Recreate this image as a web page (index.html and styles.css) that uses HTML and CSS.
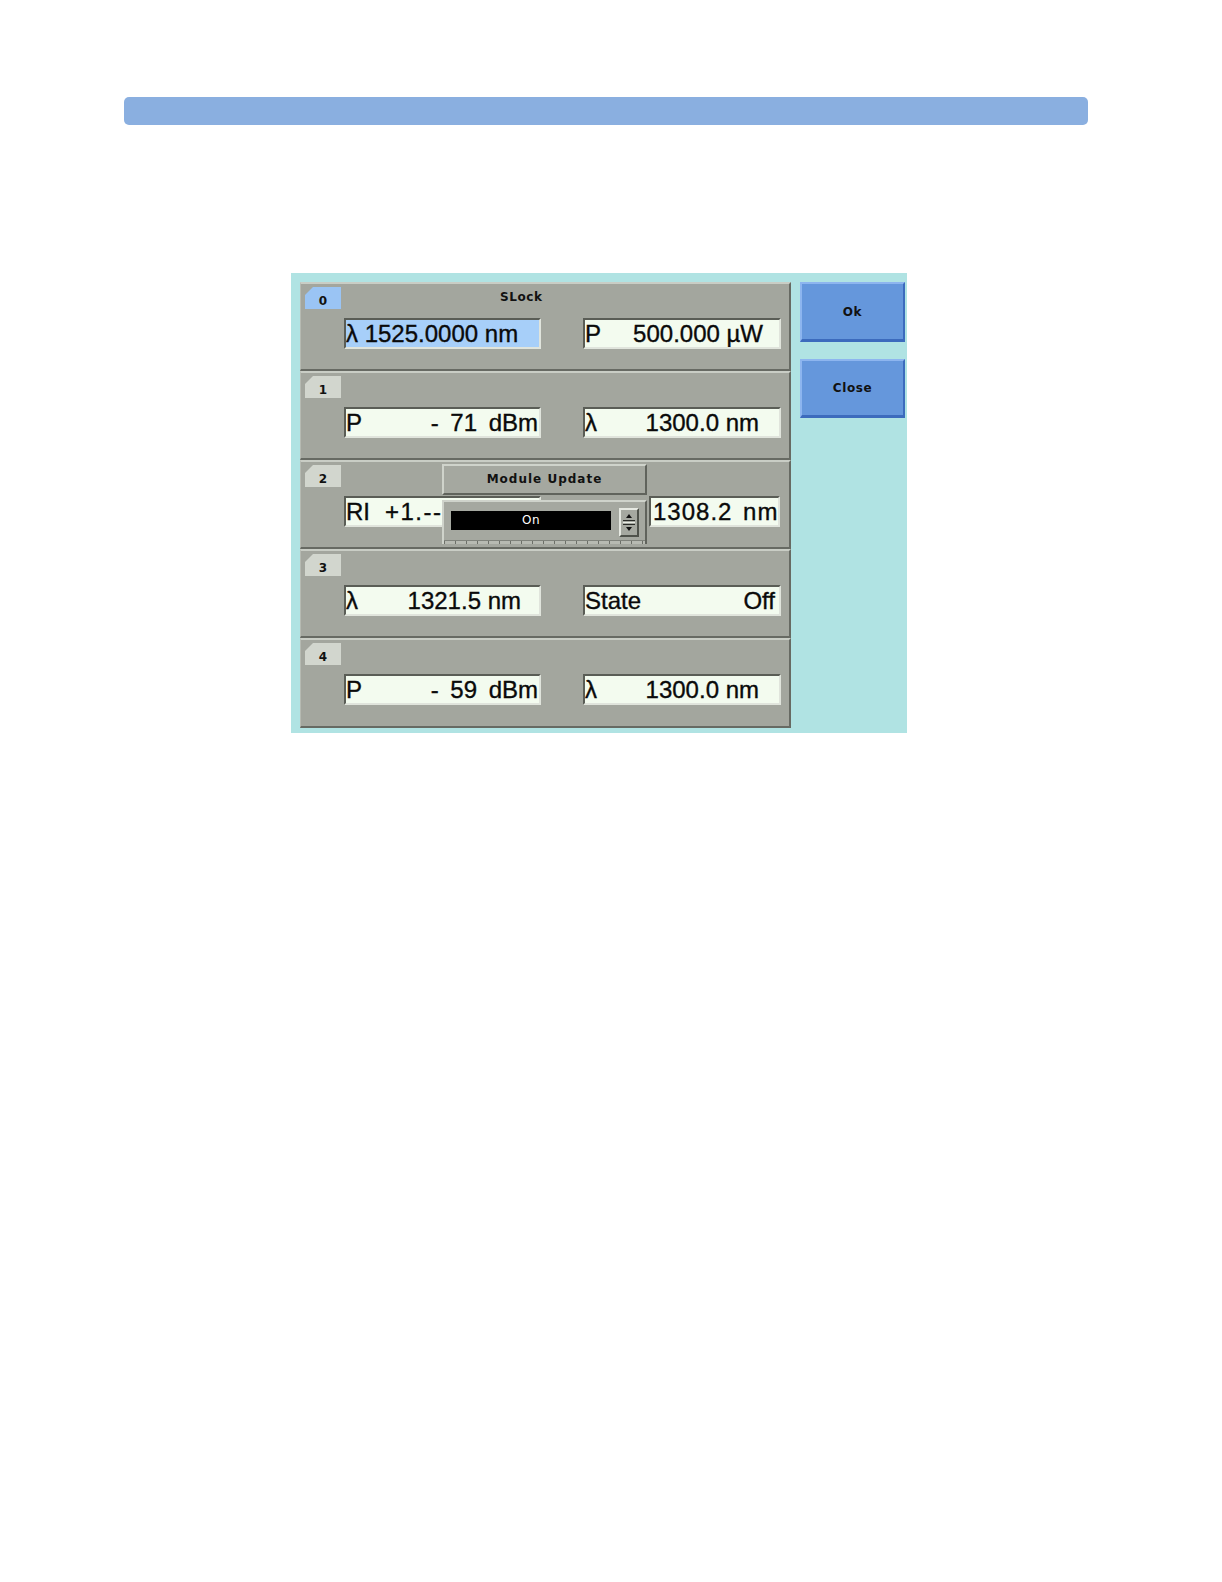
FILE: index.html
```html
<!DOCTYPE html>
<html>
<head>
<meta charset="utf-8">
<title>Module Update</title>
<link rel="stylesheet" href="styles.css">
</head>
<body>
<div class="topbar"></div>
<div class="panel">
  <div class="rows">
    <div class="row">
      <div class="row-head"><div class="tab tab-active">0</div><div class="row-title">SLock</div></div>
      <div class="fields">
        <div class="field field-left field-sel"><span class="lbl">λ 1525.0000 nm</span></div>
        <div class="field field-right"><span class="lbl">P</span><span class="val pr16">500.000 µW</span></div>
      </div>
    </div>
    <div class="row">
      <div class="row-head"><div class="tab">1</div></div>
      <div class="fields">
        <div class="field field-left"><span class="lbl">P</span><span class="val val-db pr1">- 71 dBm</span></div>
        <div class="field field-right"><span class="lbl">λ</span><span class="val pr20">1300.0 nm</span></div>
      </div>
    </div>
    <div class="row row-popup">
      <div class="row-head"><div class="tab">2</div></div>
      <div class="fields">
        <div class="field field-left"><span class="lbl">RI</span><span class="val-left">+1.--</span></div>
        <div class="field field-narrow"><span class="lbl val-wide">1308.2 nm</span></div>
      </div>
      <div class="popup">
        <div class="popup-head">Module Update</div>
        <div class="popup-body">
          <div class="popup-value">On</div>
          <div class="spinner">
            <svg width="16" height="25" viewBox="0 0 16 25">
              <polygon points="8,4 5,8 11,8" fill="#111"/>
              <line x1="2" y1="10.5" x2="14" y2="10.5" stroke="#2b2d29" stroke-width="1"/>
              <line x1="2" y1="12.5" x2="14" y2="12.5" stroke="#e8ebe4" stroke-width="1"/>
              <line x1="2" y1="14.5" x2="14" y2="14.5" stroke="#2b2d29" stroke-width="1"/>
              <polygon points="5,17 11,17 8,21" fill="#111"/>
            </svg>
          </div>
          <div class="ticks"></div>
        </div>
      </div>
    </div>
    <div class="row">
      <div class="row-head"><div class="tab">3</div></div>
      <div class="fields">
        <div class="field field-left"><span class="lbl">λ</span><span class="val pr18">1321.5 nm</span></div>
        <div class="field field-right"><span class="lbl">State</span><span class="val pr4">Off</span></div>
      </div>
    </div>
    <div class="row row-last">
      <div class="row-head"><div class="tab">4</div></div>
      <div class="fields">
        <div class="field field-left"><span class="lbl">P</span><span class="val val-db pr1">- 59 dBm</span></div>
        <div class="field field-right"><span class="lbl">λ</span><span class="val pr20">1300.0 nm</span></div>
      </div>
    </div>
  </div>
  <div class="buttons">
    <div class="btn btn-ok">Ok</div>
    <div class="btn btn-close">Close</div>
  </div>
</div>
</body>
</html>
```

FILE: styles.css
```css
* { box-sizing: border-box; }
html, body { margin: 0; padding: 0; background: #ffffff; }
body { width: 1222px; height: 1582px; font-family: "DejaVu Sans", sans-serif; }

.topbar {
  margin: 97px 0 0 124px;
  width: 964px;
  height: 28px;
  background: #8aafe0;
  border-radius: 5px;
}

.panel {
  margin: 148px 0 0 291px;
  width: 616px;
  height: 460px;
  background: #b0e3e3;
  padding: 9px 2px 5px 9px;
  display: flex;
  gap: 9px;
}

.rows { width: 491px; display: flex; flex-direction: column; }

.row {
  position: relative;
  height: 89px;
  background: #a3a69e;
  border-top: 2px solid #c9cdc5;
  border-bottom: 2px solid #676a63;
  border-right: 2px solid #676a63;
  border-left: 1px solid #b6bab2;
}
.row-last { height: 90px; }

.row-head { display: flex; align-items: flex-start; height: 25px; padding: 3px 0 0 4px; }

.tab {
  width: 36px;
  height: 22px;
  background: #d2d6ce;
  clip-path: polygon(8px 0, 100% 0, 100% 100%, 0 100%, 0 8px);
  font: bold 12px "DejaVu Sans", sans-serif;
  color: #111;
  text-align: center;
  padding-top: 7px;
  line-height: 14px;
}
.tab-active { background: #9ac4f4; }

.row-title {
  margin-left: 159px;
  margin-top: 3px;
  font: bold 12px "DejaVu Sans", sans-serif;
  letter-spacing: 0.6px;
  color: #111;
}

.fields { display: flex; padding-left: 43px; margin-top: 9px; }

.field {
  height: 31px;
  display: flex;
  align-items: center;
  border-top: 2px solid #5a5d56;
  border-left: 2px solid #5a5d56;
  border-bottom: 2px solid #e0e4dc;
  border-right: 2px solid #e0e4dc;
  background: #f3fbef;
  font: 24px "Liberation Sans", Arial, sans-serif;
  color: #0a0a0a;
  -webkit-text-stroke: 0.35px #0a0a0a;
  white-space: pre;
  line-height: 27px;
  overflow: hidden;
}
.field-left { width: 197px; }
.field-right { width: 198px; margin-left: 42px; }
.field-narrow { width: 131px; margin-left: 108px; padding-left: 2px; }
.field-sel { background: #a7cff9; }

.val { margin-left: auto; }
.val-db { word-spacing: 5px; }
.val-left { margin-left: 15px; letter-spacing: 1.5px; }
.val-wide { letter-spacing: 1px; word-spacing: 3px; }
.pr1 { padding-right: 1px; }
.pr4 { padding-right: 4px; }
.pr16 { padding-right: 16px; }
.pr18 { padding-right: 18px; }
.pr20 { padding-right: 20px; }

.popup {
  position: absolute;
  top: 2px;
  left: 141px;
  width: 205px;
}
.popup-head {
  height: 31px;
  background: #a5a8a0;
  border-top: 2px solid #cfd3cb;
  border-left: 2px solid #cfd3cb;
  border-bottom: 2px solid #60635c;
  border-right: 2px solid #60635c;
  text-align: center;
  font: bold 12px "DejaVu Sans", sans-serif;
  letter-spacing: 1px;
  line-height: 26px;
  color: #111;
}
.popup-body {
  position: relative;
  margin-top: 5px;
  height: 44px;
  background: #a5a8a0;
  border-top: 2px solid #cfd3cb;
  border-left: 2px solid #cfd3cb;
  border-right: 2px solid #60635c;
  display: flex;
  align-items: flex-start;
}
.popup-value {
  margin: 9px 0 0 7px;
  width: 160px;
  height: 19px;
  background: #000;
  color: #fff;
  font: 12px "DejaVu Sans", sans-serif;
  letter-spacing: 0.5px;
  text-align: center;
  line-height: 19px;
}
.spinner {
  margin: 6px 0 0 8px;
  width: 20px;
  height: 29px;
  background: #a5a8a0;
  border-top: 2px solid #e6e9e2;
  border-left: 2px solid #e6e9e2;
  border-bottom: 2px solid #4f524b;
  border-right: 2px solid #4f524b;
  display: flex;
  align-items: center;
  justify-content: center;
}
.spinner svg { display: block; }
.ticks {
  position: absolute;
  left: 0;
  right: 0;
  bottom: 0;
  height: 4px;
  border-top: 1px solid #7f827b;
  background: repeating-linear-gradient(90deg, #6c6f68 0, #6c6f68 1px, #b7bab2 1px, #b7bab2 11px);
}

.buttons { display: flex; flex-direction: column; gap: 17px; padding-top: 0; }
.btn {
  width: 105px;
  background: #6597dc;
  border-top: 2px solid #8db5ef;
  border-left: 2px solid #8db5ef;
  border-bottom: 3px solid #3c6bbd;
  border-right: 2px solid #3c6bbd;
  display: flex;
  align-items: center;
  justify-content: center;
  font: bold 12px "DejaVu Sans", sans-serif;
  letter-spacing: 0.6px;
  color: #111;
}
.btn-ok { height: 60px; }
.btn-close { height: 59px; }
```
